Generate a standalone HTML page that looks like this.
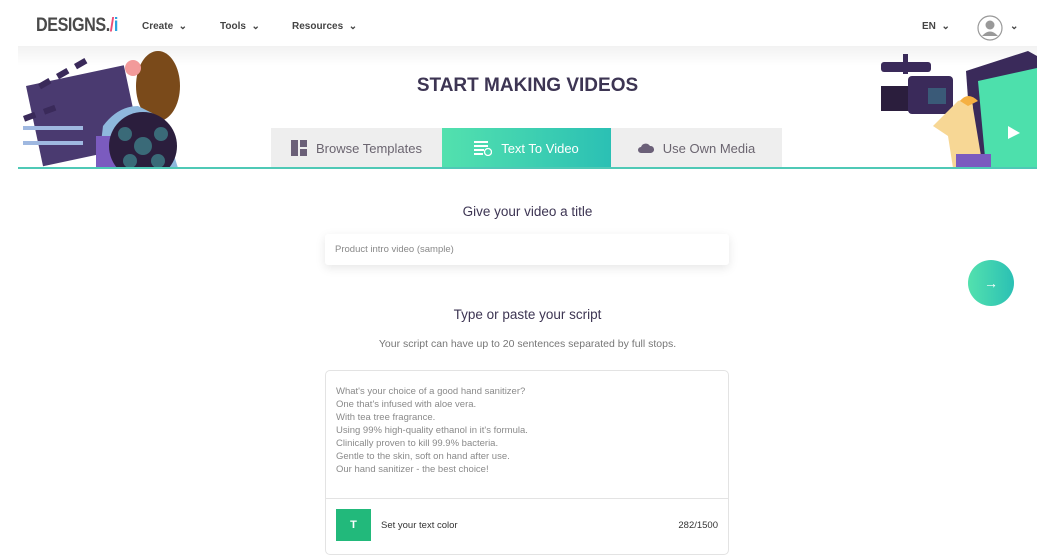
<!DOCTYPE html>
<html><head><meta charset="utf-8"><style>
*{margin:0;padding:0;box-sizing:border-box}
body{width:1055px;height:551px;overflow:hidden;background:#fff;font-family:"Liberation Sans",sans-serif;position:relative;color:#3d3553}
.abs{position:absolute}
.nav{left:0;top:0;width:1055px;height:46px;background:#fff}
.navsh{left:18px;top:46px;width:1019px;height:20px;background:linear-gradient(#f2f2f2,#fff)}
.logo{left:36px;top:15px;font-size:19px;font-weight:bold;color:#4a4a4a;letter-spacing:-0.5px;transform:scaleX(0.85);transform-origin:left}
.menu{top:21px;font-size:10px;font-weight:bold;color:#444}
.tab{top:128px;height:40px;font-size:13px;display:flex;align-items:center;justify-content:center;gap:9px;color:#6b6570;background:#eeeeee}
.line{left:18px;top:167px;width:1019px;height:2px;background:#4fc9b6}
</style></head><body>
<div class="abs nav"></div>
<div class="abs navsh"></div>
<div class="abs logo">DESIGNS.<span style="color:#e94e77">/</span><span style="color:#2aa3e0">i</span></div>
<div class="abs menu" style="left:142px">Create &nbsp;⌄</div>
<div class="abs menu" style="left:220px">Tools &nbsp;⌄</div>
<div class="abs menu" style="left:292px">Resources &nbsp;⌄</div>
<div class="abs menu" style="left:922px">EN &nbsp;⌄</div>
<svg class="abs" style="left:977px;top:15px" width="26" height="26"><circle cx="13" cy="13" r="12" fill="#fff" stroke="#999" stroke-width="1.2"/><circle cx="13" cy="10" r="4.5" fill="#999"/><path d="M5 21 Q13 12 21 21" fill="#999"/></svg>
<div class="abs menu" style="left:1010px">⌄</div>

<svg class="abs" style="left:18px;top:46px" width="165" height="122">
<g fill="#3a2a5a"><rect x="8" y="40" width="100" height="82" transform="rotate(-12 8 40)" fill="#4a3a70"/></g>
<g fill="#fff"><rect x="5" y="80" width="60" height="4" fill="#9fb8e0"/><rect x="5" y="95" width="60" height="4" fill="#9fb8e0"/></g>
<g fill="#3a2a5a"><rect x="20" y="38" width="12" height="6" transform="rotate(-30 20 38)"/><rect x="38" y="28" width="12" height="6" transform="rotate(-30 38 28)"/><rect x="56" y="18" width="12" height="6" transform="rotate(-30 56 18)"/><rect x="5" y="70" width="12" height="6" transform="rotate(-20 5 70)"/><rect x="25" y="63" width="12" height="6" transform="rotate(-20 25 63)"/></g>
<ellipse cx="140" cy="40" rx="22" ry="35" fill="#7a4a1a"/>
<path d="M80 122 L85 80 Q100 60 120 60 L140 70 L150 90 L160 122 Z" fill="#8fb8dd"/>
<rect x="78" y="90" width="55" height="32" fill="#7b5bbf"/>
<circle cx="115" cy="22" r="8" fill="#f29a9a"/>
<circle cx="125" cy="100" r="34" fill="#2b1e3d"/>
<circle cx="125" cy="100" r="9" fill="#3a6a78"/><circle cx="107" cy="88" r="7" fill="#3a6a78"/><circle cx="143" cy="88" r="7" fill="#3a6a78"/><circle cx="112" cy="115" r="7" fill="#3a6a78"/><circle cx="140" cy="115" r="7" fill="#3a6a78"/>
</svg>
<svg class="abs" style="left:878px;top:46px" width="159" height="122">
<path d="M88 25 L150 5 L159 10 L159 122 L95 122 Z" fill="#3a2a5a"/>
<path d="M100 35 L159 22 L159 122 L108 122 Z" fill="#4de0ac"/>
<path d="M130 80 L142 87 L130 93 Z" fill="#fff"/>
<rect x="3" y="16" width="50" height="10" rx="3" fill="#3a2a5a"/>
<rect x="25" y="8" width="5" height="20" fill="#3a2a5a"/>
<rect x="3" y="40" width="30" height="25" fill="#2b1e3d"/>
<rect x="30" y="30" width="45" height="38" rx="4" fill="#3a2a5a"/>
<rect x="50" y="42" width="18" height="16" fill="#3a5a78"/>
<path d="M80 55 Q95 50 95 62 L105 122 L75 122 L70 90 L55 80 Z" fill="#f7d795"/>
<path d="M82 55 Q90 45 100 55 L90 60 Z" fill="#f5b042"/>
<rect x="78" y="108" width="35" height="14" fill="#7b5bbf"/>
</svg>

<div class="abs" style="left:0;width:1055px;top:75px;text-align:center;font-size:19px;font-weight:bold;color:#3d3553">START MAKING VIDEOS</div>

<div class="abs tab" style="left:271px;width:171px"><svg width="16" height="16"><rect x="0" y="0" width="7" height="16" fill="#6b6078"/><rect x="9" y="0" width="7" height="7" fill="#6b6078"/><rect x="9" y="9" width="7" height="7" fill="#6b6078"/></svg>Browse Templates</div>
<div class="abs tab" style="left:442px;width:169px;background:linear-gradient(90deg,#53e1ae,#2bc0b4);color:#fff"><svg width="18" height="16"><g fill="#fff"><rect x="0" y="1" width="14" height="2"/><rect x="0" y="5" width="14" height="2"/><rect x="0" y="9" width="10" height="2"/><rect x="0" y="13" width="9" height="2"/></g><circle cx="14" cy="12" r="3.5" fill="none" stroke="#fff" stroke-width="1.3"/></svg>Text To Video</div>
<div class="abs tab" style="left:611px;width:171px"><svg width="16" height="12"><path d="M3 11 A3 3 0 0 1 3 5 A5 5 0 0 1 12 4 A3.5 3.5 0 0 1 13 11 Z" fill="#6b6078"/></svg>Use Own Media</div>
<div class="abs line"></div>

<div class="abs" style="left:0;width:1055px;top:204px;text-align:center;font-size:13.5px;color:#3d3553">Give your video a title</div>
<div class="abs" style="left:325px;top:234px;width:404px;height:31px;background:#fff;border-radius:3px;box-shadow:0 3px 10px rgba(0,0,0,0.1);font-size:9.5px;color:#888;padding:10px 10px">Product intro video (sample)</div>
<div class="abs" style="left:968px;top:260px;width:46px;height:46px;border-radius:50%;background:linear-gradient(90deg,#53e1ae,#2bc0b4);color:#fff;font-size:14px;text-align:center;line-height:46px">→</div>

<div class="abs" style="left:0;width:1055px;top:307px;text-align:center;font-size:13.5px;color:#3d3553">Type or paste your script</div>
<div class="abs" style="left:0;width:1055px;top:338px;text-align:center;font-size:10.5px;color:#777">Your script can have up to 20 sentences separated by full stops.</div>

<div class="abs" style="left:325px;top:370px;width:404px;height:185px;border:1px solid #e3e3e3;border-radius:5px;background:#fff"></div>
<div class="abs" style="left:336px;top:385px;font-size:9.5px;line-height:13px;color:#8a8a8a">What's your choice of a good hand sanitizer?<br>One that's infused with aloe vera.<br>With tea tree fragrance.<br>Using 99% high-quality ethanol in it's formula.<br>Clinically proven to kill 99.9% bacteria.<br>Gentle to the skin, soft on hand after use.<br>Our hand sanitizer - the best choice!</div>
<div class="abs" style="left:326px;top:498px;width:402px;height:1px;background:#e3e3e3"></div>
<div class="abs" style="left:336px;top:509px;width:35px;height:32px;background:#22b97b;color:#fff;font-size:11px;font-weight:bold;text-align:center;line-height:32px">T</div>
<div class="abs" style="left:381px;top:520px;font-size:9.5px;color:#333">Set your text color</div>
<div class="abs" style="left:660px;width:58px;text-align:right;top:520px;font-size:9.5px;color:#333">282/1500</div>
</body></html>
